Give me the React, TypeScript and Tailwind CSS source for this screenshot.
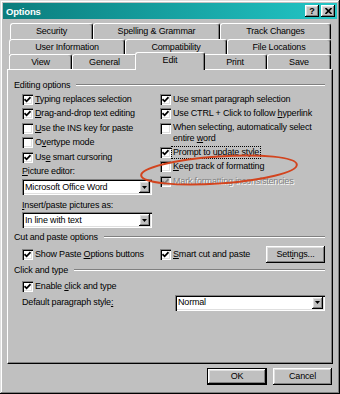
import React from "react";

const raised =
  "shadow-[inset_-1px_-1px_#000,inset_1px_1px_#fff,inset_-2px_-2px_#808080,inset_2px_2px_#dfdfdf]";
const sunken =
  "shadow-[inset_1px_1px_#808080,inset_2px_2px_#000,inset_-1px_-1px_#fff,inset_-2px_-2px_#dfdfdf]";

const Check: React.FC<{ checked?: boolean; disabled?: boolean }> = ({ checked, disabled }) => (
  <div
    className={`w-[11px] h-[11px] shrink-0 flex items-center justify-center ${sunken} ${
      disabled ? "bg-[#c0c0c0]" : "bg-white"
    }`}
  >
    {checked && (
      <svg width="7" height="7" viewBox="0 0 7 7">
        <path
          d="M0.5 3.2 L2.6 5.3 L6.5 1.2"
          fill="none"
          stroke={disabled ? "#808080" : "#000"}
          strokeWidth="1.7"
        />
      </svg>
    )}
  </div>
);

const Row: React.FC<{ checked?: boolean; disabled?: boolean; children: React.ReactNode }> = ({
  checked,
  disabled,
  children,
}) => (
  <div className="flex items-center h-[14.5px] gap-[2px]">
    <Check checked={checked} disabled={disabled} />
    <span
      className={`whitespace-nowrap ${
        disabled ? "text-[#808080] [text-shadow:1px_1px_0_#fff]" : ""
      }`}
    >
      {children}
    </span>
  </div>
);

const Heading: React.FC<{ children: React.ReactNode }> = ({ children }) => (
  <div className="flex items-center h-[14px] pr-[7px]">
    <span className="whitespace-nowrap">{children}</span>
    <div className="flex-1 ml-[6px] h-[2px] border-t border-t-[#808080] border-b border-b-white" />
  </div>
);

const Select: React.FC<{ value: string; w: string }> = ({ value, w }) => (
  <div className={`${w} h-[16px] bg-white flex items-center p-[2px] ${sunken}`}>
    <span className="flex-1 pl-[1px] whitespace-nowrap">{value}</span>
    <div className={`w-[11px] h-[12px] bg-[#c0c0c0] flex items-center justify-center ${raised}`}>
      <svg width="5" height="3" viewBox="0 0 5 3">
        <path d="M0 0 H5 L2.5 3 Z" fill="#000" />
      </svg>
    </div>
  </div>
);

const tabRow1 = [
  { label: "Security", w: "w-[83px]" },
  { label: "Spelling & Grammar", w: "w-[127px]" },
  { label: "Track Changes", w: "w-[111px]" },
];
const tabRow2 = [
  { label: "User Information", w: "w-[116px]" },
  { label: "Compatibility", w: "w-[102px]" },
  { label: "File Locations", w: "w-[104px]" },
];
const tabRow3 = [
  { label: "View", w: "w-[63px]" },
  { label: "General", w: "w-[65px]" },
  { label: "Edit", w: "w-[70px]", active: true },
  { label: "Print", w: "w-[64px]" },
  { label: "Save", w: "w-[64px]" },
];

const tabCls =
  "flex items-center justify-center bg-[#c0c0c0] border-t border-l border-white border-r border-r-black rounded-t-[3px] shadow-[inset_-1px_0_#808080] whitespace-nowrap";

export default function App() {
  return (
    <div className="relative w-[340px] h-[394px] bg-[#c0c0c0] p-[3px] text-black font-['Liberation_Sans',Arial,sans-serif] text-[9px] leading-[11px] tracking-[-0.18px] shadow-[inset_-1px_-1px_#000,inset_1px_1px_#dfdfdf,inset_-2px_-2px_#808080,inset_2px_2px_#fff] overflow-hidden select-none">
      {/* Title bar */}
      <div className="h-[16px] flex items-center justify-between px-[2px] bg-linear-to-r from-[#0b7d7d] to-[#22c6c6]">
        <span className="text-white font-bold text-[9.5px] pl-[1px]">Options</span>
        <div className="flex gap-[2px]">
          <div className={`w-[14px] h-[12px] bg-[#c0c0c0] flex items-center justify-center font-bold text-[9px] ${raised}`}>
            ?
          </div>
          <div className={`w-[14px] h-[12px] bg-[#c0c0c0] flex items-center justify-center ${raised}`}>
            <svg width="7" height="6" viewBox="0 0 7 6">
              <path d="M0.5 0 L6.5 6 M6.5 0 L0.5 6" stroke="#000" strokeWidth="1.6" />
            </svg>
          </div>
        </div>
      </div>

      {/* Tabs */}
      <div className="mt-[4px] flex flex-col">
        <div className="flex h-[16px] ml-[7px]">
          {tabRow1.map((t) => (
            <div key={t.label} className={`${tabCls} ${t.w}`}>
              {t.label}
            </div>
          ))}
        </div>
        <div className="flex h-[15px] ml-[6px]">
          {tabRow2.map((t) => (
            <div key={t.label} className={`${tabCls} ${t.w}`}>
              {t.label}
            </div>
          ))}
        </div>
        <div className="flex items-end h-[15px] ml-[6px]">
          {tabRow3.map((t) =>
            t.active ? (
              <div
                key={t.label}
                className={`${tabCls} ${t.w} -mx-[2px] h-[18px] -mb-[1px] relative z-10 pb-[2px]`}
              >
                {t.label}
              </div>
            ) : (
              <div key={t.label} className={`${tabCls} ${t.w} h-[15px]`}>
                {t.label}
              </div>
            )
          )}
        </div>
      </div>

      {/* Panel */}
      <div className="ml-[4px] w-[326px] h-[295px] border-t border-l border-white border-r border-b border-r-black border-b-black shadow-[inset_-1px_-1px_#808080] pt-[8px] pl-[6px]">
        <Heading>Editing options</Heading>
        <div className="flex pl-[8px]">
          <div className="w-[138px] flex flex-col">
            <Row checked>
              <u>T</u>yping replaces selection
            </Row>
            <Row checked>
              <u>D</u>rag-and-drop text editing
            </Row>
            <Row>
              <u>U</u>se the INS key for paste
            </Row>
            <Row>
              O<u>v</u>ertype mode
            </Row>
            <Row checked>
              Us<u>e</u> smart cursoring
            </Row>
            <div className="h-[14.5px] flex items-center">
              <span>
                <u>P</u>icture editor:
              </span>
            </div>
            <Select value="Microsoft Office Word" w="w-[130px]" />
            <div className="h-[14px] mt-[3px] flex items-center">
              <span>
                <u>I</u>nsert/paste pictures as:
              </span>
            </div>
            <Select value="In line with text" w="w-[130px]" />
          </div>
          <div className="flex-1 flex flex-col">
            <Row checked>Use smart paragraph selection</Row>
            <Row checked>
              Use CTRL + Click to follow <u>h</u>yperlink
            </Row>
            <div className="flex items-start h-[23.75px] gap-[2px] pt-[1.75px]">
              <div className="mt-0">
                <Check />
              </div>
              <span className="leading-[11px] -mt-[0.5px]">
                When selecting, automatically select
                <br />
                entire <u>w</u>ord
              </span>
            </div>
            <div className="flex items-center h-[14.5px] gap-[2px]">
              <Check checked />
              <span className="whitespace-nowrap outline outline-1 outline-dotted outline-black px-[1px] -ml-[1px]">
                Prompt to <u>u</u>pdate style
              </span>
            </div>
            <Row>
              <u>K</u>eep track of formatting
            </Row>
            <Row checked disabled>
              Mark formatting inconsistencies
            </Row>
          </div>
        </div>

        <div className="mt-[2px]">
          <Heading>Cut and paste options</Heading>
        </div>
        <div className="flex pl-[8px] h-[17px] mt-[1.5px] items-center pr-[7px]">
          <div className="w-[138px]">
            <Row checked>
              Show Paste <u>O</u>ptions buttons
            </Row>
          </div>
          <div className="flex-1 flex items-center justify-between">
            <Row checked>
              <u>S</u>mart cut and paste
            </Row>
            <div className={`w-[59px] h-[17px] flex items-center justify-center ${raised}`}>
              Sett<u>i</u>ngs...
            </div>
          </div>
        </div>

        <div className="mt-[0.5px]">
          <Heading>Click and type</Heading>
        </div>
        <div className="pl-[8px] mt-[2px]">
          <Row checked>
            Enable <u>c</u>lick and type
          </Row>
        </div>
        <div className="pl-[8px] mt-[1px] flex items-center justify-between pr-[7px]">
          <span>
            Default paragraph style<u>:</u>
          </span>
          <Select value="Normal" w="w-[150px]" />
        </div>
      </div>

      {/* Buttons */}
      <div className="flex justify-end gap-[6px] mt-[4px] pr-[5px]">
        <div className="w-[60px] h-[17px] border border-black flex items-center justify-center">
          <div className={`w-full h-full flex items-center justify-center ${raised}`}>OK</div>
        </div>
        <div className={`w-[59px] h-[17px] flex items-center justify-center ${raised}`}>Cancel</div>
      </div>

      {/* Hand-drawn red annotation */}
      <svg className="absolute inset-0 pointer-events-none" width="340" height="394" viewBox="0 0 340 394">
        <ellipse
          cx="219"
          cy="170"
          rx="78"
          ry="13.5"
          transform="rotate(-4 219 170)"
          fill="none"
          stroke="#d2441e"
          strokeWidth="2"
        />
      </svg>
    </div>
  );
}
